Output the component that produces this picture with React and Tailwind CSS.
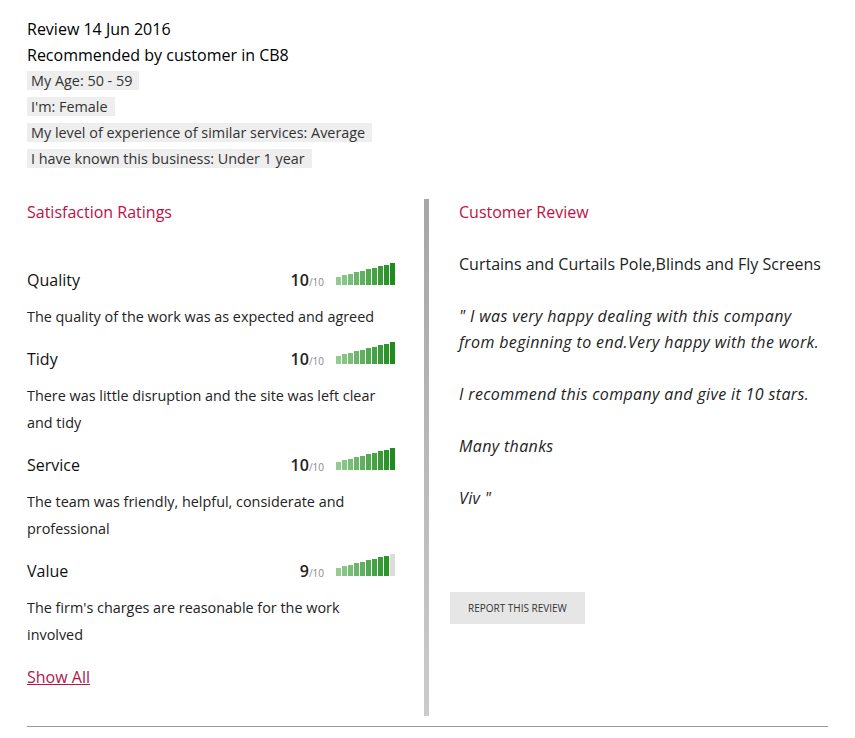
import React from 'react';

const barColors = [
  'bg-[#93cc93]',
  'bg-[#86c586]',
  'bg-[#79be79]',
  'bg-[#6cb76c]',
  'bg-[#5fb05f]',
  'bg-[#52a952]',
  'bg-[#45a245]',
  'bg-[#389b38]',
  'bg-[#2b942b]',
  'bg-[#1e8d1e]',
];

const barHeights = [
  'h-[8px]',
  'h-[10px]',
  'h-[11px]',
  'h-[13px]',
  'h-[14px]',
  'h-[16px]',
  'h-[17px]',
  'h-[19px]',
  'h-[20px]',
  'h-[22px]',
];

const ratings = [
  { title: 'Quality', score: 10, text: 'The quality of the work was as expected and agreed' },
  { title: 'Tidy', score: 10, text: 'There was little disruption and the site was left clear and tidy' },
  { title: 'Service', score: 10, text: 'The team was friendly, helpful, considerate and professional' },
  { title: 'Value', score: 9, text: "The firm's charges are reasonable for the work involved" },
];

const tags = [
  'My Age: 50 - 59',
  "I'm: Female",
  'My level of experience of similar services: Average',
  'I have known this business: Under 1 year',
];

function ScoreBars({ score }) {
  return (
    <div className="flex items-end gap-[1px] h-[22px] mb-[12px]">
      {barHeights.map((h, i) => (
        <div
          key={i}
          className={`w-[5px] ${h} ${i < score ? barColors[i] : 'bg-[#dcdcdc]'}`}
        />
      ))}
    </div>
  );
}

function RatingItem({ item }) {
  return (
    <div className="mb-[18px]">
      <div className="flex items-center justify-between h-[22px]">
        <span className="text-[16px] text-[#111]">{item.title}</span>
        <div className="flex items-center">
          <div className="flex items-baseline mr-[12px]">
            <span className="text-[16px] font-semibold text-[#222] leading-[22px]">{item.score}</span>
            <span className="text-[10px] text-[#888]">/10</span>
          </div>
          <ScoreBars score={item.score} />
        </div>
      </div>
      <p className="mt-[12px] text-[14.4px] leading-[27px] text-[#222]">{item.text}</p>
    </div>
  );
}

export default function App() {
  return (
    <div
      className="bg-white w-[855px] px-[27px] pt-[16px] text-[#222]"
      style={{ fontFamily: '"Open Sans", "Liberation Sans", sans-serif' }}
    >
      {/* Header */}
      <div className="text-[16px] leading-[26px] text-black">Review 14 Jun 2016</div>
      <div className="text-[16px] leading-[26px] text-black">Recommended by customer in CB8</div>
      {tags.map((t) => (
        <div key={t} className="text-[14.4px] leading-[26px]">
          <span className="bg-[#eeeeee] pl-[4px] pr-[7px] text-[#333]">{t}</span>
        </div>
      ))}

      {/* Columns */}
      <div className="flex mt-[27px]">
        <div className="w-[368px] pt-[2px] pb-[28px]">
          <h3 className="text-[16px] leading-[22px] text-[#c0103f]">Satisfaction Ratings</h3>
          <div className="mt-[46px]">
            {ratings.map((r) => (
              <RatingItem key={r.title} item={r} />
            ))}
          </div>
          <a href="#" className="block text-[16px] leading-[22px] text-[#b3164a] underline mt-[2px]">
            Show All
          </a>
        </div>

        <div className="ml-[29px] w-[5px] self-stretch bg-linear-to-b from-[#a6a6a6] to-[#cbcbcb]" />

        <div className="flex-1 pl-[21px] pt-[2px]">
          <div className="pl-[9px]">
            <h3 className="text-[16px] leading-[22px] text-[#c0103f]">Customer Review</h3>
            <div className="mt-[28px] text-[16px] leading-[26px] text-[#222]">
              <p className="mb-[26px]">Curtains and Curtails Pole,Blinds and Fly Screens</p>
              <div className="italic tracking-[0.36px]">
                <p className="mb-[26px]">
                  " I was very happy dealing with this company from beginning to end.Very happy with the work.
                </p>
                <p className="mb-[26px]">I recommend this company and give it 10 stars.</p>
                <p className="mb-[26px]">Many thanks</p>
                <p>Viv "</p>
              </div>
            </div>
          </div>
          <button className="mt-[81px] bg-[#e6e6e6] h-[32px] px-[18px] text-[10px] uppercase text-[#333]">
            Report this review
          </button>
        </div>
      </div>

      <div className="mt-[10px] border-t border-[#9a9a9a]" />
    </div>
  );
}
